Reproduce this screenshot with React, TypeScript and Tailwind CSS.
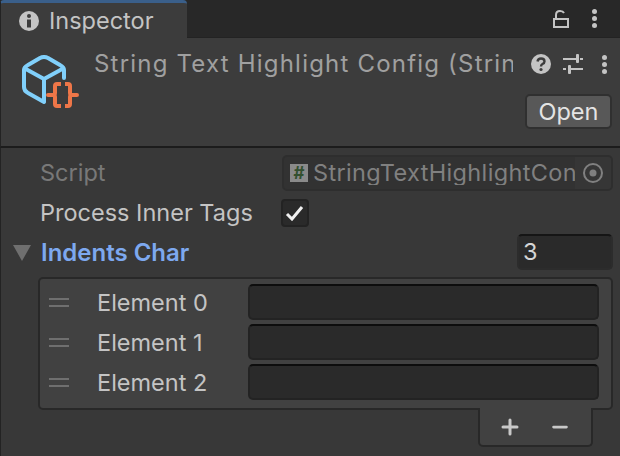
import { Minus, Plus } from "lucide-react";

const font = "font-['Inter','Liberation_Sans',sans-serif]";

function Kebab() {
	return (
		<div className="flex flex-col gap-[2px]">
			<div className="size-[5px] rounded-full bg-[#c4c4c4]" />
			<div className="size-[5px] rounded-full bg-[#c4c4c4]" />
			<div className="size-[5px] rounded-full bg-[#c4c4c4]" />
		</div>
	);
}

function AssetIcon() {
	return (
		<svg width="62" height="62" viewBox="0 0 62 62" fill="none" className="shrink-0">
			<path
				d="M25 47 L9 38 Q5 36 5 32 V15 Q5 12 9 10 L21 3 Q25 1 29 3 L41 10 Q45 12 45 15 V23"
				stroke="#81d0fb"
				strokeWidth="4"
				strokeLinecap="round"
				strokeLinejoin="round"
			/>
			<path
				d="M5 13 L25 24 L45 13 M25 24 V47"
				stroke="#81d0fb"
				strokeWidth="4"
				strokeLinejoin="round"
			/>
			<path
				d="M42 29 H38 Q36 29 36 31 V38 Q36 40 34 40 H29 H34 Q36 40 36 42 V49 Q36 51 38 51 H42"
				stroke="#ee7648"
				strokeWidth="4"
				strokeLinejoin="round"
			/>
			<path
				d="M46 29 H49 Q51 29 51 31 V38 Q51 40 53 40 H58 H53 Q51 40 51 42 V49 Q51 51 49 51 H46"
				stroke="#ee7648"
				strokeWidth="4"
				strokeLinejoin="round"
			/>
		</svg>
	);
}

function Element({ index }: { index: number }) {
	return (
		<div className="flex h-[36px] items-center">
			<div className="ml-[9px] flex w-[20px] flex-col gap-[5px]">
				<div className="h-[2px] bg-[#6f6f6f]" />
				<div className="h-[2px] bg-[#6f6f6f]" />
			</div>
			<p className="mt-[2px] ml-[28px] w-[151px] text-[23.5px] leading-none text-[#c4c4c4]">Element {index}</p>
			<div className="h-[36px] w-[351px] rounded-[5px] border-t-2 border-t-[#0d0d0d] border-x-2 border-b-2 border-x-[#232323] border-b-[#232323] bg-[#2a2a2a]" />
		</div>
	);
}

export default function App() {
	return (
		<div className={`${font} flex h-[456px] w-[620px] flex-col overflow-hidden bg-[#383838]`}>
			<div className="flex h-[38px] bg-[#282828] border-b border-b-[#232323]">
				<div className="flex h-[38px] w-[187px] items-center rounded-t-[4px] border-t-[3px] border-t-[#3a5f8a] bg-[#3c3c3c] pl-[18px] border-l border-l-[#232323]">
					<svg width="20" height="20" viewBox="0 0 20 20" className="shrink-0">
						<circle cx="10" cy="10" r="10" fill="#c4c4c4" />
						<circle cx="10" cy="5" r="2" fill="#3c3c3c" />
						<rect x="8" y="8.5" width="4" height="8" fill="#3c3c3c" />
					</svg>
					<p className="ml-[10px] text-[23.5px] leading-none text-[#c4c4c4]">Inspector</p>
				</div>
				<div className="ml-auto flex items-center">
					<svg width="16" height="20" viewBox="0 0 16 20" fill="none" stroke="#c4c4c4" strokeWidth="2" className="mr-[23px]">
						<rect x="1" y="10" width="14" height="8" />
						<path d="M3 10 V6 Q3 2 7 2 Q10 2 11 4" />
					</svg>
					<div className="mr-[23px]">
						<Kebab />
					</div>
				</div>
			</div>

			<div className="flex h-[110px] border-l border-l-[#232323] bg-[#3c3c3c] border-b-2 border-b-[#1c1c1c]">
				<div className="ml-[18px] mt-[17px]">
					<AssetIcon />
				</div>
				<div className="flex min-w-0 flex-1 flex-col">
					<div className="flex items-center pt-[11px]">
						<p className="ml-[13px] w-[419px] overflow-hidden text-[24px] leading-[30px] tracking-[1.2px] whitespace-nowrap text-[#a0a0a0]">
							String Text Highlight Config (StringTextHighlightConfig)
						</p>
						<svg width="20" height="20" viewBox="0 0 20 20" className="ml-[18px] shrink-0">
							<circle cx="10" cy="10" r="10" fill="#c4c4c4" />
							<path d="M6.5 7.5 Q7 4.5 10 4.5 Q13.5 4.5 13.5 7.5 Q13.5 9 11.5 10 Q10 10.8 10 12.5" fill="none" stroke="#3c3c3c" strokeWidth="2.4" />
							<circle cx="10" cy="15.5" r="1.6" fill="#3c3c3c" />
						</svg>
						<svg width="20" height="20" viewBox="0 0 20 20" className="ml-[12px] shrink-0" fill="#c4c4c4">
							<rect x="0" y="4" width="13" height="2" />
							<rect x="13" y="0" width="3" height="9" rx="1" />
							<rect x="17" y="4" width="3" height="2" />
							<rect x="0" y="14" width="3" height="2" />
							<rect x="5" y="11" width="3" height="9" rx="1" />
							<rect x="8" y="14" width="12" height="2" />
						</svg>
						<div className="ml-[19px]">
							<Kebab />
						</div>
					</div>
					<div className="mt-[15px] mr-[8px] self-end">
						<div className="flex h-[35px] w-[87px] items-center justify-center rounded-[5px] border-2 border-[#303030] bg-[#585858] text-[23.5px] leading-none text-[#e4e4e4]">
							Open
						</div>
					</div>
				</div>
			</div>

			<div className="flex flex-1 flex-col border-l border-l-[#232323] pt-[7px]">
				<div className="flex h-[36px] items-center">
					<p className="ml-[39px] w-[242px] text-[23.5px] leading-none text-[#787878]">Script</p>
					<div className="flex h-[36px] w-[331px] items-center rounded-[5px] border-2 border-[#2e2e2e] bg-[#323232]">
						<div className="ml-[6px] flex size-[18px] items-center justify-center bg-[#8a8a8a] text-[17px] leading-none font-bold text-[#33502f]">
							#
						</div>
						<p className="ml-[5px] w-[262px] overflow-hidden text-[23.5px] leading-none tracking-[0.35px] whitespace-nowrap text-[#808080]">
							StringTextHighlightConfig
						</p>
						<div className="flex h-full flex-1 items-center justify-center rounded-r-[3px] bg-[#363636]">
							<svg width="20" height="20" viewBox="0 0 20 20" fill="none">
								<circle cx="10" cy="10" r="9" stroke="#808080" strokeWidth="2" />
								<circle cx="10" cy="10" r="3.5" fill="#808080" />
							</svg>
						</div>
					</div>
				</div>

				<div className="mt-[6px] flex h-[32px] items-center">
					<p className="ml-[39px] w-[241px] text-[23.5px] leading-none text-[#c4c4c4]">Process Inner Tags</p>
					<div className="flex size-[28px] items-center justify-center rounded-[4px] border-2 border-[#232323] bg-[#2a2a2a]">
						<svg width="20" height="16" viewBox="0 0 20 16" fill="none" stroke="#f0f0f0" strokeWidth="3">
							<path d="M2 9 L7 14 L17 2" />
						</svg>
					</div>
				</div>

				<div className="mt-[5px] flex h-[36px] items-center">
					<svg width="18" height="16" viewBox="0 0 18 16" className="mt-[2px] ml-[12px]">
						<path d="M0 0 H18 L9 16 Z" fill="#6f6f6f" />
					</svg>
					<p className="mt-[2px] ml-[10px] w-[476px] text-[24px] leading-none font-semibold text-[#7da8ef]">Indents Char</p>
					<div className="flex h-[36px] w-[96px] items-center rounded-[5px] border-t-2 border-t-[#151515] border-x-2 border-b-2 border-x-[#2c2c2c] border-b-[#2c2c2c] bg-[#2a2a2a] pl-[4px] text-[23.5px] leading-none text-[#d4d4d4]">
						3
					</div>
				</div>

				<div className="mt-[7px] ml-[37px] flex h-[133px] w-[575px] flex-col gap-[4px] rounded-[5px] border-2 border-[#282828] bg-[#414141] pt-[5px]">
					<Element index={0} />
					<Element index={1} />
					<Element index={2} />
				</div>

				<div className="mr-[27px] -mt-[2px] flex h-[39px] w-[115px] items-center self-end rounded-b-[5px] border-x-2 border-b-2 border-[#282828] bg-[#414141] relative">
					<Plus className="ml-[18px] size-[24px] text-[#c8c8c8]" strokeWidth={3} />
					<Minus className="ml-[27px] size-[22px] text-[#c8c8c8]" strokeWidth={3} />
				</div>
			</div>
		</div>
	);
}
